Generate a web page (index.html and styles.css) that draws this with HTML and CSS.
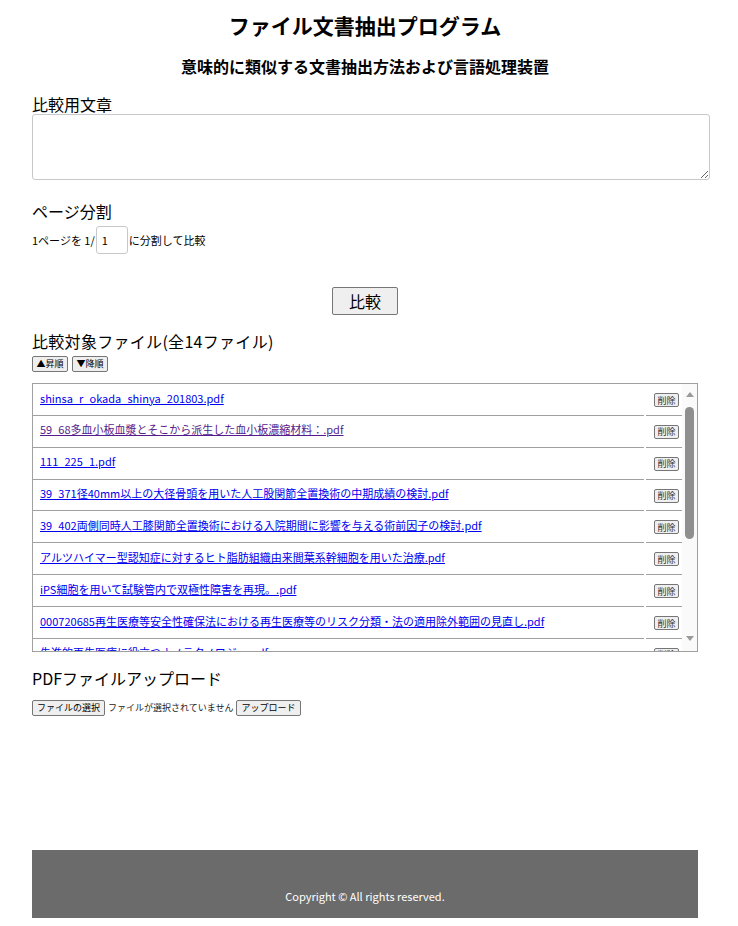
FILE: index.html
```html
<!DOCTYPE html>
<html lang="ja">
<head>
<meta charset="utf-8">
<title>ファイル文書抽出プログラム</title>
<link rel="stylesheet" href="styles.css">
</head>
<body>
<div class="page">
  <h1 class="title">ファイル文書抽出プログラム</h1>
  <h2 class="subtitle">意味的に類似する文書抽出方法および言語処理装置</h2>

  <div class="label label-first">比較用文章</div>
  <textarea class="compare-text"></textarea>

  <div class="label label-split">ページ分割</div>
  <div class="split-row">
    <span>1ページを 1/</span>
    <input class="split-input" type="text" value="1">
    <span>に分割して比較</span>
  </div>

  <div class="compare-wrap">
    <button class="compare-btn" type="button">比較</button>
  </div>

  <div class="label label-files">比較対象ファイル(全14ファイル)</div>
  <div class="sort-row">
    <button class="small-btn" type="button">▲昇順</button>
    <button class="small-btn" type="button">▼降順</button>
  </div>

  <div class="file-box">
    <div class="file-list">
      <div class="file-row"><div class="name-cell"><a href="#" class="file-link">shinsa_r_okada_shinya_201803.pdf</a></div><div class="del-cell"><button class="del-btn" type="button">削除</button></div></div>
      <div class="file-row"><div class="name-cell"><a href="#" class="file-link visited">59_68多血小板血漿とそこから派生した血小板濃縮材料：.pdf</a></div><div class="del-cell"><button class="del-btn" type="button">削除</button></div></div>
      <div class="file-row"><div class="name-cell"><a href="#" class="file-link">111_225_1.pdf</a></div><div class="del-cell"><button class="del-btn" type="button">削除</button></div></div>
      <div class="file-row"><div class="name-cell"><a href="#" class="file-link">39_371径40mm以上の大径骨頭を用いた人工股関節全置換術の中期成績の検討.pdf</a></div><div class="del-cell"><button class="del-btn" type="button">削除</button></div></div>
      <div class="file-row"><div class="name-cell"><a href="#" class="file-link">39_402両側同時人工膝関節全置換術における入院期間に影響を与える術前因子の検討.pdf</a></div><div class="del-cell"><button class="del-btn" type="button">削除</button></div></div>
      <div class="file-row"><div class="name-cell"><a href="#" class="file-link">アルツハイマー型認知症に対するヒト脂肪組織由来間葉系幹細胞を用いた治療.pdf</a></div><div class="del-cell"><button class="del-btn" type="button">削除</button></div></div>
      <div class="file-row"><div class="name-cell"><a href="#" class="file-link">iPS細胞を用いて試験管内で双極性障害を再現。.pdf</a></div><div class="del-cell"><button class="del-btn" type="button">削除</button></div></div>
      <div class="file-row"><div class="name-cell"><a href="#" class="file-link">000720685再生医療等安全性確保法における再生医療等のリスク分類・法の適用除外範囲の見直し.pdf</a></div><div class="del-cell"><button class="del-btn" type="button">削除</button></div></div>
      <div class="file-row"><div class="name-cell"><a href="#" class="file-link">先進的再生医療に役立つナノテクノロジー.pdf</a></div><div class="del-cell"><button class="del-btn" type="button">削除</button></div></div>
    </div>
    <div class="scrollbar">
      <div class="arrow-up"></div>
      <div class="thumb"></div>
      <div class="scroll-space"></div>
      <div class="arrow-down"></div>
    </div>
  </div>

  <div class="label label-upload">PDFファイルアップロード</div>
  <div class="upload-row">
    <button class="small-btn file-btn" type="button">ファイルの選択</button>
    <span class="file-status">ファイルが選択されていません</span>
    <button class="small-btn file-btn" type="button">アップロード</button>
  </div>

  <footer class="footer">Copyright © All rights reserved.</footer>
</div>
</body>
</html>
```

FILE: styles.css
```css
html, body {
  margin: 0;
  padding: 0;
  background: #ffffff;
}

body {
  font-family: "Noto Sans CJK JP", "Noto Sans", sans-serif;
  color: #000000;
}

.page {
  width: 666px;
  margin-left: 32px;
  padding-bottom: 8px;
}

.title {
  margin: 10px 0 0;
  font-size: 21px;
  line-height: 30px;
  font-weight: bold;
  text-align: center;
}

.subtitle {
  margin: 14px 0 0;
  font-size: 16px;
  line-height: 24px;
  font-weight: bold;
  text-align: center;
}

.label {
  font-size: 16px;
  line-height: 20px;
}

.label-first { margin-top: 16px; }
.label-split { margin-top: 21px; }
.label-files { margin-top: 16px; letter-spacing: 0.3px; }
.label-upload { margin-top: 16px; }

.compare-text {
  display: block;
  box-sizing: border-box;
  width: 678px;
  height: 66px;
  margin: 0;
  border: 1px solid #c9c9c9;
  border-radius: 3px;
  resize: both;
  font-family: inherit;
}

.split-row {
  margin-top: 5px;
  display: flex;
  align-items: center;
  font-size: 11px;
  line-height: 14px;
  height: 28px;
}

.split-input {
  box-sizing: border-box;
  width: 32px;
  height: 28px;
  margin: 0 1px 0 1px;
  padding: 0 5px;
  border: 1px solid #c9c9c9;
  border-radius: 3px;
  font-size: 11px;
  font-family: inherit;
}

.compare-wrap {
  margin-top: 33px;
  display: flex;
  justify-content: center;
}

.compare-btn {
  box-sizing: border-box;
  width: 66px;
  height: 28px;
  padding: 0;
  font-family: inherit;
  font-size: 16px;
  line-height: 20px;
  background: #efefef;
  border: 1px solid #767676;
  border-radius: 2px;
  color: #000;
}

.sort-row {
  margin-top: 5px;
  display: flex;
  gap: 4px;
  height: 16px;
}

.small-btn {
  box-sizing: border-box;
  height: 16px;
  padding: 0 3px;
  font-family: inherit;
  font-size: 9px;
  line-height: 12px;
  background: #efefef;
  border: 1px solid #767676;
  border-radius: 2px;
  color: #000;
}

.sort-row .small-btn {
  width: 36px;
  padding: 0;
}

.file-box {
  box-sizing: border-box;
  margin-top: 11px;
  height: 269px;
  border: 1px solid #a0a0a0;
  display: flex;
  overflow: hidden;
}

.file-list {
  flex: 1;
  min-width: 0;
  overflow: hidden;
}

.file-row {
  display: flex;
  gap: 2px;
}

.name-cell {
  flex: 1;
  min-width: 0;
  box-sizing: border-box;
  height: 31.86px;
  padding: 5.5px 0 0 7px;
  border-bottom: 1px solid #a0a0a0;
  font-size: 11px;
  line-height: 16px;
  white-space: nowrap;
  overflow: hidden;
}

.file-link {
  color: #0000ee;
  text-decoration: underline;
}

.file-link.visited {
  color: #551a8b;
}

.del-cell {
  box-sizing: border-box;
  width: 36px;
  height: 31.86px;
  padding: 9px 0 0 8px;
  border-bottom: 1px solid #a0a0a0;
}

.del-btn {
  box-sizing: border-box;
  width: 25px;
  height: 14px;
  padding: 0;
  font-family: inherit;
  font-size: 9px;
  line-height: 11px;
  background: #efefef;
  border: 1px solid #767676;
  border-radius: 2px;
  color: #333;
  display: block;
}

.scrollbar {
  width: 15px;
  flex: none;
  background: #fafafa;
  display: flex;
  flex-direction: column;
  align-items: center;
}

.arrow-up {
  margin-top: 8px;
  width: 0;
  height: 0;
  border-left: 4.5px solid transparent;
  border-right: 4.5px solid transparent;
  border-bottom: 5px solid #9a9a9a;
}

.thumb {
  margin-top: 10px;
  width: 9px;
  height: 132px;
  border-radius: 5px;
  background: #8f8f8f;
}

.scroll-space {
  flex: 1;
}

.arrow-down {
  margin-bottom: 10px;
  width: 0;
  height: 0;
  border-left: 4.5px solid transparent;
  border-right: 4.5px solid transparent;
  border-top: 5px solid #9a9a9a;
}

.upload-row {
  margin-top: 12px;
  display: flex;
  align-items: center;
  height: 16px;
  font-size: 9px;
  line-height: 12px;
}

.file-btn {
  padding: 0 4px;
}

.file-status {
  margin: 0 3px;
  color: #222;
}

.footer {
  margin-top: 134px;
  box-sizing: border-box;
  height: 68px;
  padding-top: 38px;
  background: #6b6b6b;
  color: #ffffff;
  font-size: 11px;
  line-height: 16px;
  text-align: center;
}
```
